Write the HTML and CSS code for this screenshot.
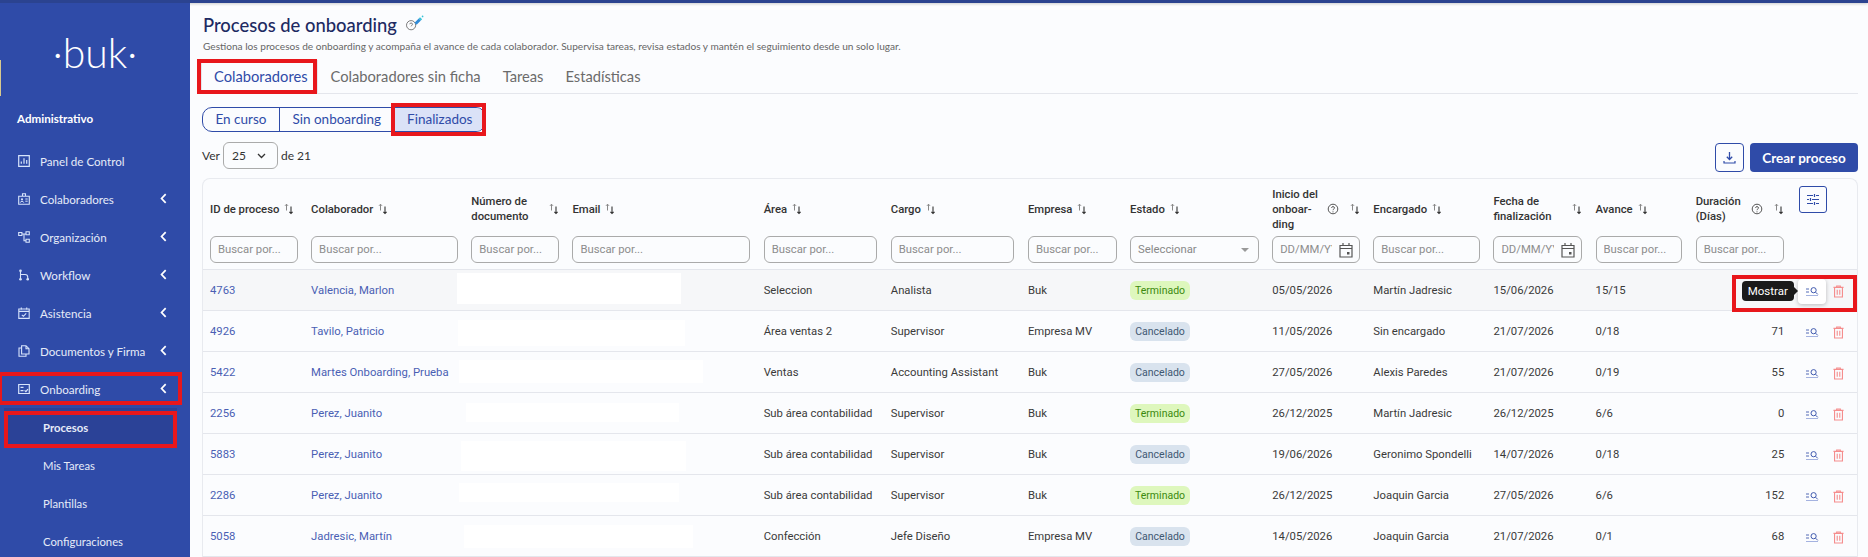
FILE: index.html
```html
<!DOCTYPE html>
<html lang="es">
<head>
    <meta charset="utf-8">
    <title>Procesos de onboarding</title>
    <link rel="stylesheet" href="styles.css">
</head>
<body>
    <svg class="sprite" width="0" height="0">
        <symbol id="i-sort" viewBox="0 0 10 12"><path d="M2.5 7.5V1.2M1 2.8l1.5-1.6L4 2.8" fill="none" stroke="#888" stroke-width="1"/><path d="M7 3.5v7M5.4 8.8 7 10.5l1.6-1.7" fill="none" stroke="#333" stroke-width="1.1"/></symbol>
        <symbol id="i-help" viewBox="0 0 12 12"><circle cx="6" cy="6" r="4.8" fill="none" stroke="#555" stroke-width="1"/><path d="M4.5 4.8C4.6 3.2 7.5 3.2 7.5 4.9 7.5 6 6 6 6 7.2" fill="none" stroke="#555" stroke-width="1"/><circle cx="6" cy="8.8" r=".6" fill="#555"/></symbol>
        <symbol id="i-cal" viewBox="0 0 14 16"><path d="M1 3.5h12V15H1zM1 6.5h12M4 1v3M10 1v3" fill="none" stroke="#555" stroke-width="1.2"/><rect x="8" y="10" width="2.5" height="2.5" fill="#555"/></symbol>
        <symbol id="i-show" viewBox="0 0 14 12"><path d="M1 3h3M1 6h3" stroke="#3f59ae" stroke-width=".9"/><path d="M1 9.5h12" stroke="#9aa9dc" stroke-width=".9"/><circle cx="8.6" cy="4.2" r="2.6" fill="none" stroke="#3f59ae" stroke-width="1"/><path d="M10.6 6.2 12.8 8.4" stroke="#3f59ae" stroke-width="1"/></symbol>
        <symbol id="i-trash" viewBox="0 0 12 14"><path d="M.5 2.5h11M4 2.5V1h4v1.5M1.7 2.5V13h8.6V2.5M4.6 5v5.6M7.4 5v5.6" fill="none" stroke="#f58d8d" stroke-width="1.2"/></symbol>
        <symbol id="i-chev" viewBox="0 0 8 12"><path d="M6.5 1 1.8 6l4.7 5" fill="none" stroke="#fff" stroke-width="2"/></symbol>
    </svg>

    <div class="topline"></div>
    <div class="page">
        <aside class="sidebar">
            <div class="logo">·buk·</div>
            <div class="logo-tick"></div>
            <div class="side-title">Administrativo</div>
            <nav class="side-nav">
                <a class="side-item"><svg class="side-icon" viewBox="0 0 12 12"><path d="M.7.7h10.6v10.6H.7zM3.3 8.8V6.5M6 8.8V3.3M8.7 8.8V5" fill="none" stroke="#d7e4fb" stroke-width="1.2"/></svg>Panel de Control</a>
                <a class="side-item"><svg class="side-icon" viewBox="0 0 12 12"><path d="M.7 3.2h10.6v8H.7zM4.5 3.2V.8h3v2.4" fill="none" stroke="#d7e4fb" stroke-width="1.1"/><circle cx="4" cy="6.3" r="1.1" fill="#d7e4fb"/><path d="M2.3 9.6c.3-1.8 3.1-1.8 3.4 0M7.3 6h2.4M7.3 8.2h2.4" fill="none" stroke="#d7e4fb"/></svg>Colaboradores<svg class="side-chev"><use href="#i-chev"/></svg></a>
                <a class="side-item"><svg class="side-icon" viewBox="0 0 12 12"><path d="M.7 1.5h3.2v3H.7zM8 .8h3.3v3H8zM8 8.2h3.3v3H8zM3.9 3H8M6 3v6.7h2" fill="none" stroke="#d7e4fb" stroke-width="1.1"/></svg>Organización<svg class="side-chev"><use href="#i-chev"/></svg></a>
                <a class="side-item"><svg class="side-icon" viewBox="0 0 12 12"><circle cx="2.5" cy="1.8" r="1.3" fill="#d7e4fb"/><circle cx="2.5" cy="10.2" r="1.3" fill="#d7e4fb"/><circle cx="9.7" cy="10.2" r="1.3" fill="#d7e4fb"/><path d="M2.5 2v8M2.5 5.5h4.6c1.5 0 2.6 1 2.6 2.6v2" fill="none" stroke="#d7e4fb" stroke-width="1.1"/></svg>Workflow<svg class="side-chev"><use href="#i-chev"/></svg></a>
                <a class="side-item"><svg class="side-icon" viewBox="0 0 12 12"><path d="M.8 2h10.4v9.4H.8zM.8 4.4h10.4M3.3.4v2.4M8.7.4v2.4M3.8 7.8l1.6 1.5 2.8-3" fill="none" stroke="#d7e4fb" stroke-width="1.1"/></svg>Asistencia<svg class="side-chev"><use href="#i-chev"/></svg></a>
                <a class="side-item"><svg class="side-icon" viewBox="0 0 12 12"><path d="M3.6 9V.7h4.4l3 3V9zM8 .7v3h3M3.6 3H1v8.3h7V9" fill="none" stroke="#d7e4fb" stroke-width="1.1"/></svg>Documentos y Firma<svg class="side-chev"><use href="#i-chev"/></svg></a>
                <a class="side-item"><svg class="side-icon" viewBox="0 0 12 12"><path d="M.7 1.5h10.6v9H.7zM2.5 4.3h3M2.5 7.7h3M6.6 7.4l1.3 1.2 2-2.4" fill="none" stroke="#d7e4fb" stroke-width="1.2"/></svg>Onboarding<svg class="side-chev"><use href="#i-chev"/></svg></a>
                <a class="side-sub side-sub-active">Procesos</a>
                <a class="side-sub">Mis Tareas</a>
                <a class="side-sub">Plantillas</a>
                <a class="side-sub">Configuraciones</a>
            </nav>
        </aside>

        <main class="main">
            <h1 class="title">Procesos de onboarding
                <svg class="title-icon" viewBox="0 0 22 20">
                    <circle cx="7" cy="12" r="5.4" fill="none" stroke="#666" stroke-width="1"/>
                    <path d="M5.3 10.8c.2-1.9 3.4-1.8 3.4.1 0 1.2-1.7 1.2-1.7 2.4" fill="none" stroke="#666"/>
                    <path d="m11 9 5-5 2.5 2.5-5 5z" fill="#2f8bd8"/>
                    <path d="m16 4 1.5-1.5L20 5l-1.5 1.5z" fill="#35c3d6"/>
                    <circle cx="20.5" cy="1.7" r="1" fill="#35c3d6"/>
                </svg>
            </h1>
            <p class="subtitle">Gestiona los procesos de onboarding y acompaña el avance de cada colaborador. Supervisa tareas, revisa estados y mantén el seguimiento desde un solo lugar.</p>

            <div class="tabs">
                <a class="tab tab-active">Colaboradores</a>
                <a class="tab">Colaboradores sin ficha</a>
                <a class="tab">Tareas</a>
                <a class="tab">Estadísticas</a>
            </div>

            <div class="segments">
                <a class="segment">En curso</a>
                <a class="segment">Sin onboarding</a>
                <a class="segment segment-active">Finalizados</a>
            </div>

            <div class="toolbar">
                <div class="per-page">
                    Ver
                    <div class="per-select">25 <svg width="9" height="6" viewBox="0 0 9 6"><path d="m1 1 3.5 3.5L8 1" fill="none" stroke="#333" stroke-width="1.3"/></svg></div>
                    de 21
                </div>
                <div class="actions">
                    <button class="btn-icon"><svg width="13" height="13" viewBox="0 0 13 13"><path d="M6.5 1v7.2M3.8 5.8l2.7 2.7 2.7-2.7" fill="none" stroke="#2f4ba8" stroke-width="1.3"/><path d="M1 10v2h11v-2" fill="none" stroke="#2f4ba8" stroke-width="1.2"/></svg></button>
                    <button class="btn-primary">Crear proceso</button>
                </div>
            </div>

            <div class="table-box">
                <table class="grid">
                    <colgroup>
                        <col class="c-id"><col class="c-name"><col class="c-doc"><col class="c-mail"><col class="c-area"><col class="c-cargo"><col class="c-emp"><col class="c-state"><col class="c-start"><col class="c-owner"><col class="c-end"><col class="c-prog"><col class="c-days"><col class="c-act">
                    </colgroup>
                    <thead>
                        <tr class="head-row">
                            <th><div class="th">ID de proceso <svg class="sort"><use href="#i-sort"/></svg></div></th>
                            <th><div class="th">Colaborador <svg class="sort"><use href="#i-sort"/></svg></div></th>
                            <th><div class="th th-split"><span>Número de documento</span> <svg class="sort"><use href="#i-sort"/></svg></div></th>
                            <th><div class="th">Email <svg class="sort"><use href="#i-sort"/></svg></div></th>
                            <th><div class="th">Área <svg class="sort"><use href="#i-sort"/></svg></div></th>
                            <th><div class="th">Cargo <svg class="sort"><use href="#i-sort"/></svg></div></th>
                            <th><div class="th">Empresa <svg class="sort"><use href="#i-sort"/></svg></div></th>
                            <th><div class="th">Estado <svg class="sort"><use href="#i-sort"/></svg></div></th>
                            <th><div class="th th-split"><span class="th-narrow">Inicio del onboar-<br>ding</span> <svg class="help"><use href="#i-help"/></svg><svg class="sort"><use href="#i-sort"/></svg></div></th>
                            <th><div class="th">Encargado <svg class="sort"><use href="#i-sort"/></svg></div></th>
                            <th><div class="th th-split"><span>Fecha de finalización</span> <svg class="sort"><use href="#i-sort"/></svg></div></th>
                            <th><div class="th">Avance <svg class="sort"><use href="#i-sort"/></svg></div></th>
                            <th><div class="th th-split"><span>Duración (Días)</span> <svg class="help"><use href="#i-help"/></svg><svg class="sort"><use href="#i-sort"/></svg></div></th>
                            <th class="th-columns"><button class="btn-columns"><svg width="14" height="13" viewBox="0 0 14 13"><path d="M1 2.5h6M10 2.5h3M1 6.5h2M6 6.5h7M1 10.5h6M10 10.5h3M8.5 1v3M4.5 5v3M8.5 9v3" fill="none" stroke="#2f4ba8" stroke-width="1.2"/></svg></button></th>
                        </tr>
                        <tr class="filter-row">
                            <th><input class="filter" placeholder="Buscar por..."></th>
                            <th><input class="filter" placeholder="Buscar por..."></th>
                            <th><input class="filter" placeholder="Buscar por..."></th>
                            <th><input class="filter" placeholder="Buscar por..."></th>
                            <th><input class="filter" placeholder="Buscar por..."></th>
                            <th><input class="filter" placeholder="Buscar por..."></th>
                            <th><input class="filter" placeholder="Buscar por..."></th>
                            <th><div class="filter filter-select">Seleccionar<span class="caret"></span></div></th>
                            <th><div class="filter filter-date"><input placeholder="DD/MM/YYYY"><svg class="cal"><use href="#i-cal"/></svg></div></th>
                            <th><input class="filter" placeholder="Buscar por..."></th>
                            <th><div class="filter filter-date"><input placeholder="DD/MM/YYYY"><svg class="cal"><use href="#i-cal"/></svg></div></th>
                            <th><input class="filter" placeholder="Buscar por..."></th>
                            <th><input class="filter" placeholder="Buscar por..."></th>
                            <th></th>
                        </tr>
                    </thead>
                    <tbody>
                        <tr class="row-hover">
                            <td><a class="link">4763</a></td><td><a class="link">Valencia, Marlon</a></td><td></td><td></td>
                            <td>Seleccion</td><td>Analista</td><td>Buk</td><td><span class="badge badge-done">Terminado</span></td>
                            <td>05/05/2026</td><td>Martín Jadresic</td><td>15/06/2026</td><td>15/15</td><td class="num"></td>
                            <td class="row-actions"><span class="act act-hover"><svg class="show"><use href="#i-show"/></svg><span class="tooltip">Mostrar</span></span><svg class="trash"><use href="#i-trash"/></svg></td>
                        </tr>
                        <tr>
                            <td><a class="link">4926</a></td><td><a class="link">Tavilo, Patricio</a></td><td></td><td></td>
                            <td>Área ventas 2</td><td>Supervisor</td><td>Empresa MV</td><td><span class="badge badge-off">Cancelado</span></td>
                            <td>11/05/2026</td><td>Sin encargado</td><td>21/07/2026</td><td>0/18</td><td class="num">71</td>
                            <td class="row-actions"><span class="act"><svg class="show"><use href="#i-show"/></svg></span><svg class="trash"><use href="#i-trash"/></svg></td>
                        </tr>
                        <tr>
                            <td><a class="link">5422</a></td><td><a class="link">Martes Onboarding, Prueba</a></td><td></td><td></td>
                            <td>Ventas</td><td>Accounting Assistant</td><td>Buk</td><td><span class="badge badge-off">Cancelado</span></td>
                            <td>27/05/2026</td><td>Alexis Paredes</td><td>21/07/2026</td><td>0/19</td><td class="num">55</td>
                            <td class="row-actions"><span class="act"><svg class="show"><use href="#i-show"/></svg></span><svg class="trash"><use href="#i-trash"/></svg></td>
                        </tr>
                        <tr>
                            <td><a class="link">2256</a></td><td><a class="link">Perez, Juanito</a></td><td></td><td></td>
                            <td>Sub área contabilidad</td><td>Supervisor</td><td>Buk</td><td><span class="badge badge-done">Terminado</span></td>
                            <td>26/12/2025</td><td>Martín Jadresic</td><td>26/12/2025</td><td>6/6</td><td class="num">0</td>
                            <td class="row-actions"><span class="act"><svg class="show"><use href="#i-show"/></svg></span><svg class="trash"><use href="#i-trash"/></svg></td>
                        </tr>
                        <tr>
                            <td><a class="link">5883</a></td><td><a class="link">Perez, Juanito</a></td><td></td><td></td>
                            <td>Sub área contabilidad</td><td>Supervisor</td><td>Buk</td><td><span class="badge badge-off">Cancelado</span></td>
                            <td>19/06/2026</td><td>Geronimo Spondelli</td><td>14/07/2026</td><td>0/18</td><td class="num">25</td>
                            <td class="row-actions"><span class="act"><svg class="show"><use href="#i-show"/></svg></span><svg class="trash"><use href="#i-trash"/></svg></td>
                        </tr>
                        <tr>
                            <td><a class="link">2286</a></td><td><a class="link">Perez, Juanito</a></td><td></td><td></td>
                            <td>Sub área contabilidad</td><td>Supervisor</td><td>Buk</td><td><span class="badge badge-done">Terminado</span></td>
                            <td>26/12/2025</td><td>Joaquin Garcia</td><td>27/05/2026</td><td>6/6</td><td class="num">152</td>
                            <td class="row-actions"><span class="act"><svg class="show"><use href="#i-show"/></svg></span><svg class="trash"><use href="#i-trash"/></svg></td>
                        </tr>
                        <tr>
                            <td><a class="link">5058</a></td><td><a class="link">Jadresic, Martín</a></td><td></td><td></td>
                            <td>Confección</td><td>Jefe Diseño</td><td>Empresa MV</td><td><span class="badge badge-off">Cancelado</span></td>
                            <td>14/05/2026</td><td>Joaquin Garcia</td><td>21/07/2026</td><td>0/1</td><td class="num">68</td>
                            <td class="row-actions"><span class="act"><svg class="show"><use href="#i-show"/></svg></span><svg class="trash"><use href="#i-trash"/></svg></td>
                        </tr>
                    </tbody>
                </table>
            </div>
        </main>
    </div>

    <!-- tapas blancas sobre datos personales -->
    <div class="hide hide-1"></div>
    <div class="hide hide-2"></div>
    <div class="hide hide-3"></div>
    <div class="hide hide-4"></div>
    <div class="hide hide-5"></div>
    <div class="hide hide-6"></div>
    <div class="hide hide-7"></div>

    <!-- recuadros rojos de la anotacion -->
    <div class="mark mark-tab"></div>
    <div class="mark mark-seg"></div>
    <div class="mark mark-side"></div>
    <div class="mark mark-sub"></div>
    <div class="mark mark-act"></div>
</body>
</html>
```

FILE: styles.css
```css
* {
    box-sizing: border-box;
}

html, body {
    height: 557px;
    overflow: hidden;
}

body {
    position: relative;
    margin: 0;
    background-color: #fbfcfe;
    font-family: "Lato", Arial, sans-serif;
    color: #333;
}

.sprite {
    position: absolute;
}

.topline {
    height: 3px;
    background-color: #2b4390;
    box-shadow: 0 1px 3px rgba(0, 0, 0, 0.2);
}

.page {
    display: flex;
    height: 554px;
}

/* barra lateral */
.sidebar {
    position: relative;
    width: 190px;
    flex-shrink: 0;
    background-color: #2f4ba8;
    color: #e6ebf8;
}

.logo {
    padding-top: 27px;
    height: 108px;
    text-align: center;
    font-family: "Lato", sans-serif;
    font-weight: 300;
    font-size: 41px;
    line-height: 46px;
    color: #fff;
}

.logo-tick {
    position: absolute;
    left: 0;
    top: 57px;
    width: 1px;
    height: 36px;
    background-color: #d8c98e;
}

.side-title {
    padding-left: 17px;
    font-size: 11.6px;
    font-weight: 700;
    line-height: 16px;
    color: #fff;
}

.side-nav {
    margin-top: 15px;
}

.side-item {
    display: flex;
    align-items: center;
    position: relative;
    height: 38px;
    padding-left: 18px;
    font-size: 11.6px;
}

.side-icon {
    width: 12px;
    height: 12px;
    margin-right: 10px;
}

.side-chev {
    position: absolute;
    left: 160px;
    top: 13px;
    width: 7px;
    height: 11px;
}

.side-sub {
    display: flex;
    align-items: center;
    height: 38px;
    padding-left: 43px;
    font-size: 11.3px;
}

.side-sub-active {
    margin: 0 13px 0 4px;
    padding-left: 39px;
    background-color: #2b4297;
    font-weight: 700;
}

/* contenido */
.main {
    flex: 1;
    min-width: 0;
    padding: 0 10px 0 12px;
}

.title {
    display: flex;
    align-items: center;
    margin: 0;
    padding: 8px 0 0 1px;
    height: 35px;
    font-size: 18.4px;
    font-weight: 500;
    color: #1d2a62;
}

.title-icon {
    width: 19px;
    height: 17px;
    margin: -3px 0 0 8px;
}

.subtitle {
    margin: 2px 0 0 1px;
    font-size: 10.1px;
    line-height: 13px;
    color: #666;
}

.tabs {
    display: flex;
    height: 34px;
    margin-top: 7px;
    border-bottom: 1px solid #e4e6ec;
}

.tab {
    display: flex;
    align-items: center;
    padding: 0 11px 2px;
    font-size: 14.7px;
    color: #6b6b6b;
}

.tab-active {
    margin-left: -1px;
    margin-right: 2px;
    padding: 0 9px 2px 12px;
    border-left: 1px solid #e4e6ec;
    border-right: 1px solid #e4e6ec;
    color: #2f4ba8;
}

.segments {
    display: flex;
    width: max-content;
    height: 25px;
    margin-top: 13px;
    border: 1px solid #2f4ba8;
    border-radius: 10px;
    overflow: hidden;
}

.segment {
    display: flex;
    align-items: center;
    padding: 0 12.5px 1px;
    font-size: 13.5px;
    color: #2f4ba8;
    border-right: 1px solid #2f4ba8;
}

.segment:last-child {
    border-right: none;
}

.segment-active {
    background-color: #dbe2f7;
}

.toolbar {
    display: flex;
    justify-content: space-between;
    align-items: flex-start;
    height: 36px;
    margin-top: 10px;
}

.per-page {
    display: flex;
    align-items: center;
    gap: 3px;
    height: 27px;
    font-size: 12px;
}

.per-select {
    display: flex;
    align-items: center;
    justify-content: space-between;
    width: 55px;
    height: 27px;
    padding: 0 11px 0 8px;
    border: 1px solid #aaa;
    border-radius: 6px;
}

.actions {
    display: flex;
    gap: 6px;
    margin-top: 1px;
}

.btn-icon {
    display: flex;
    align-items: center;
    justify-content: center;
    width: 29px;
    height: 29px;
    padding: 0;
    background-color: transparent;
    border: 1px solid #2f4ba8;
    border-radius: 4px;
}

.btn-primary {
    width: 108px;
    height: 29px;
    padding: 0;
    background-color: #2f4ba8;
    border: none;
    border-radius: 4px;
    font-family: inherit;
    font-size: 13.5px;
    font-weight: 700;
    color: #fff;
}

/* tabla */
.table-box {
    border: 1px solid #e8eaef;
    border-bottom: none;
    border-radius: 8px 8px 0 0;
}

.grid {
    width: 1654px;
    table-layout: fixed;
    border-collapse: separate;
    border-spacing: 0;
    font-family: "Roboto", Arial, sans-serif;
    font-size: 11.3px;
}

.c-id { width: 101px; }
.c-name { width: 160px; }
.c-doc { width: 101px; }
.c-mail { width: 191px; }
.c-area { width: 127px; }
.c-cargo { width: 137px; }
.c-emp { width: 102px; }
.c-state { width: 142px; }
.c-start { width: 101px; }
.c-owner { width: 120px; }
.c-end { width: 102px; }
.c-prog { width: 100px; }
.c-days { width: 102px; }
.c-act { width: 66px; }

.grid th {
    padding: 0 6.5px 0 7px;
    text-align: left;
    font-weight: 500;
    color: #333;
}

.head-row {
    height: 57px;
}

.head-row th {
    padding-top: 3px;
    line-height: 15px;
}

.th {
    display: flex;
    align-items: center;
    gap: 5px;
    white-space: nowrap;
}

.th-split {
    justify-content: space-between;
}

.th-split > span {
    width: 68px;
    white-space: normal;
}

.th-split > .th-narrow {
    width: 46px;
}

.sort {
    width: 10px;
    height: 12px;
    flex-shrink: 0;
}

.help {
    width: 12px;
    height: 12px;
    flex-shrink: 0;
    margin-left: auto;
    margin-right: 6px;
}

.th-columns {
    vertical-align: top;
}

.grid .th-columns {
    padding: 7px 0 0 8px;
}

.btn-columns {
    display: flex;
    align-items: center;
    justify-content: center;
    width: 28px;
    height: 27px;
    padding: 0;
    background-color: transparent;
    border: 1px solid #2f4ba8;
    border-radius: 3px;
}

.filter-row {
    height: 34px;
}

.filter-row th {
    vertical-align: top;
    border-bottom: 1px solid #e4e6ec;
}

.filter {
    display: flex;
    align-items: center;
    width: 100%;
    height: 27px;
    padding: 0 6px 0 7px;
    background-color: transparent;
    border: 1px solid #aaa;
    border-radius: 6px;
    font-family: "Roboto", Arial, sans-serif;
    font-size: 11.3px;
    font-weight: 400;
    color: #888;
}

.filter::placeholder,
.filter-date input::placeholder {
    color: #8d8d8d;
}

.filter-select {
    justify-content: space-between;
    padding-right: 9px;
}

.caret {
    width: 0;
    height: 0;
    border-left: 4px solid transparent;
    border-right: 4px solid transparent;
    border-top: 4px solid #999;
}

.filter-date input {
    flex: 1;
    min-width: 0;
    padding: 0;
    border: none;
    outline: none;
    background-color: transparent;
    font-family: inherit;
    font-size: 11.3px;
}

.cal {
    width: 14px;
    height: 16px;
    flex-shrink: 0;
    margin-left: 7px;
}

.grid td {
    height: 41px;
    padding: 1px 6.5px 0 7px;
    border-bottom: 1px solid #e4e6ec;
    white-space: nowrap;
    color: #3a3a3a;
}

.row-hover td {
    background-color: #f6f7f9;
}

.link {
    color: #4a5fb4;
}

.badge {
    display: inline-block;
    width: 60px;
    height: 19px;
    border-radius: 6px;
    text-align: center;
    font-size: 10.5px;
    line-height: 19px;
}

.badge-done {
    background-color: #def7bd;
    color: #3c8a0e;
}

.badge-off {
    background-color: #d9e3ee;
    color: #3f5872;
}

.grid .num {
    text-align: right;
}

.grid .row-actions {
    padding: 3px 0 0 7px;
}

.row-actions {
    position: relative;
}

.act {
    position: relative;
    display: inline-flex;
    align-items: center;
    justify-content: center;
    width: 28px;
    height: 25px;
    vertical-align: middle;
    border-radius: 4px;
}

.act-hover {
    background-color: #fff;
    box-shadow: 0 1px 4px rgba(0, 0, 0, 0.25);
}

.show {
    width: 14px;
    height: 12px;
}

.trash {
    width: 11px;
    height: 13px;
    margin-left: 7px;
    vertical-align: middle;
}

.tooltip {
    position: absolute;
    right: 32px;
    top: 2px;
    width: 52px;
    height: 20px;
    background-color: #1a1a1a;
    border-radius: 4px;
    text-align: center;
    font-size: 11.5px;
    line-height: 20px;
    color: #fff;
}

.tooltip::after {
    content: "";
    position: absolute;
    left: 100%;
    top: 6px;
    border-left: 4px solid #1a1a1a;
    border-top: 4px solid transparent;
    border-bottom: 4px solid transparent;
}

/* tapas */
.hide {
    position: absolute;
    background-color: #fff;
}

.hide-1 { left: 457px; top: 273px; width: 224px; height: 31px; }
.hide-2 { left: 458px; top: 320px; width: 227px; height: 26px; }
.hide-3 { left: 459px; top: 360px; width: 244px; height: 23px; }
.hide-4 { left: 466px; top: 403px; width: 213px; height: 19px; }
.hide-5 { left: 461px; top: 441px; width: 225px; height: 30px; }
.hide-6 { left: 459px; top: 483px; width: 220px; height: 19px; }
.hide-7 { left: 464px; top: 525px; width: 229px; height: 23px; }

/* anotacion */
.mark {
    position: absolute;
    border: 4px solid #e8171c;
}

.mark-tab { left: 197px; top: 59px; width: 120px; height: 35px; }
.mark-seg { left: 391px; top: 103px; width: 95px; height: 33px; }
.mark-side { left: -2px; top: 372px; width: 184px; height: 33px; }
.mark-sub { left: 4px; top: 411px; width: 173px; height: 37px; }
.mark-act { left: 1732px; top: 275px; width: 125px; height: 37px; }
```
